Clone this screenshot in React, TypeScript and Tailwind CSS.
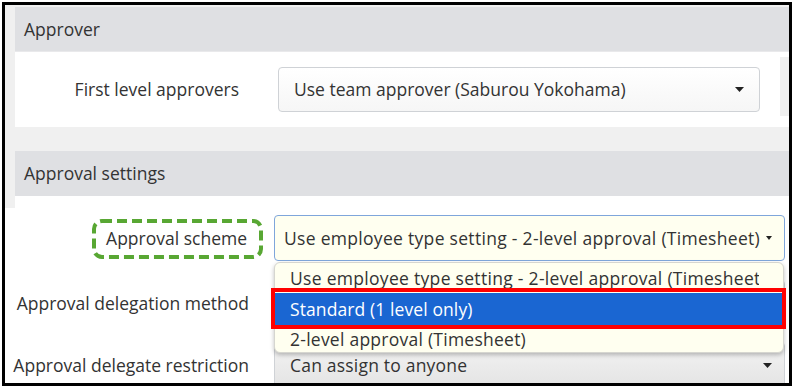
import React from "react";

const font = { fontFamily: '"Open Sans", "Liberation Sans", sans-serif' };

function Caret({ className }: { className?: string }) {
  return (
    <svg className={className} width="9" height="5" viewBox="0 0 9 5">
      <path d="M0 0 H9 L4.5 5 Z" fill="#222" />
    </svg>
  );
}

export default function App() {
  return (
    <div className="w-[793px] h-[389px] bg-white pl-[2px] pt-[2px] text-[#333] text-[17.5px]" style={font}>
      <div className="w-[790px] h-[384px] border-[3px] border-black bg-[#f0f0f0] overflow-hidden flex flex-col">
        <div className="h-[2px] shrink-0" />
        {/* Approver section */}
        <div className="ml-[10px] shrink-0">
          <div className="h-[45px] bg-[#dfe0e3] pl-[9px] flex items-center border-b border-[#e9e9eb]">Approver</div>
          <div className="h-[75px] bg-white flex items-center">
            <div className="w-[224px] text-right">First level approvers</div>
            <div className="ml-[39px] w-[482px] h-[45px] rounded-[4px] border border-[#cfd2d6] bg-gradient-to-b from-white to-[#f6f6f6] flex items-center pl-[15px] pr-[15px]">
              <span className="flex-1">Use team approver (Saburou Yokohama)</span>
              <Caret />
            </div>
            <div className="ml-[20px] w-[9px] h-[59px] self-start mt-[5px] bg-[#f0f0f0]" />
          </div>
        </div>
        <div className="h-[24px] shrink-0" />
        {/* Approval settings */}
        <div className="ml-[10px] h-[45px] bg-[#dfe0e3] pl-[9px] flex items-center shrink-0">Approval settings</div>
        <div className="ml-[10px] h-[12px] bg-white shrink-0" />
        <div className="flex-1 bg-white relative">
          {/* Row 1 */}
          <div className="mt-[7px] h-[46px] flex items-center">
            <div className="w-[244px] text-right pr-[2px]">Approval scheme</div>
            <div className="ml-[25px] w-[511px] h-[46px] rounded-[4px] border border-[#7fa6db] bg-[#fffff0] flex items-center pl-[9px] pr-[12px]">
              <span className="flex-1 whitespace-nowrap overflow-hidden tracking-[0.3px]">Use employee type setting - 2-level approval (Timesheet)</span>
              <svg width="6" height="4" viewBox="0 0 6 4"><path d="M0 0 H6 L3 4 Z" fill="#222" /></svg>
            </div>
          </div>
          {/* Row 2 */}
          <div className="mt-[19px] h-[46px] flex items-center">
            <div className="w-[244px] text-right">Approval delegation method</div>
            <div className="ml-[25px] w-[511px] h-[46px] rounded-[4px] border border-[#cfd2d6] bg-[#f4f4f4]" />
          </div>
          {/* Row 3 */}
          <div className="mt-[16px] h-[46px] flex items-center">
            <div className="w-[244px] text-right">Approval delegate restriction</div>
            <div className="ml-[25px] w-[511px] h-[46px] rounded-[4px] border border-[#cfd2d6] bg-gradient-to-b from-[#f3f3f3] to-[#e4e4e4] flex items-center pl-[15px] pr-[12px]">
              <span className="flex-1 tracking-[0.2px]">Can assign to anyone</span>
              <Caret />
            </div>
          </div>

          {/* Green dashed annotation */}
          <svg className="absolute left-[87px] top-[11px]" width="171" height="40" viewBox="0 0 171 40">
            <rect x="2" y="2" width="167" height="36" rx="8" fill="none" stroke="#58a733" strokeWidth="4" strokeDasharray="10 5" />
          </svg>

          {/* Dropdown list */}
          <div className="absolute left-[269px] top-[54px] w-[510px] h-[91px] rounded-[6px] border border-[#d6d6d0] bg-[#fffff0] shadow-[0_2px_4px_rgba(0,0,0,0.25)] overflow-hidden">
            <div className="h-[30px] flex items-center pl-[15px] pr-[24px]">
              <span className="whitespace-nowrap overflow-hidden tracking-[0.3px]">Use employee type setting - 2-level approval (Timesheet)</span>
            </div>
            <div className="h-[32px] flex items-center pl-[15px] bg-[#1a66d2] text-white tracking-[0.1px]">Standard (1 level only)</div>
            <div className="h-[29px] flex items-center pl-[15px] tracking-[0.25px]">2-level approval (Timesheet)</div>
          </div>

          {/* Red annotation */}
          <div className="absolute left-[266px] top-[80px] w-[515px] h-[41px] border-[4px] border-[#ff0000]" />
        </div>
      </div>
    </div>
  );
}
